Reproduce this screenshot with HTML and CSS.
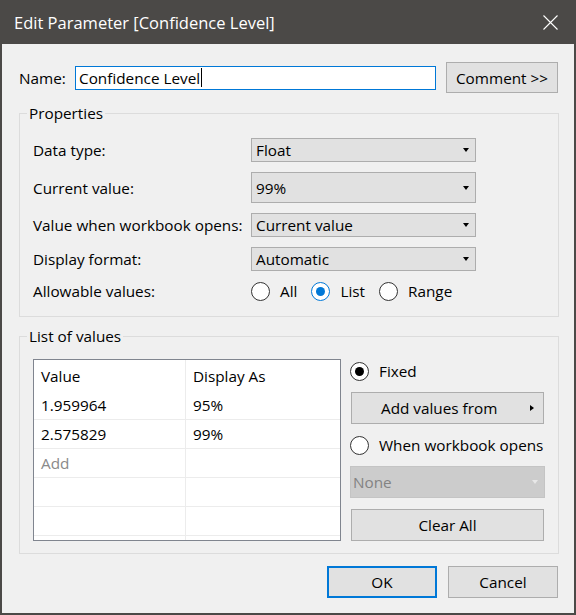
FILE: index.html
```html
<!DOCTYPE html>
<html lang="en">
<head>
    <meta charset="UTF-8">
    <meta name="viewport" content="width=device-width, initial-scale=1.0">
    <title>Edit Parameter [Confidence Level]</title>
    <link rel="stylesheet" href="styles.css">
</head>
<body>
    <div class="dialog">
        <header class="titlebar">
            <span class="title">Edit Parameter [Confidence Level]</span>
            <svg class="close" width="15" height="15" viewBox="0 0 15 15">
                <path d="M0.5 0.5 L14.5 14.5 M14.5 0.5 L0.5 14.5" stroke="#fff" stroke-width="1.1" fill="none"/>
            </svg>
        </header>

        <div class="content">
            <div class="name-row">
                <span class="name-label">Name:</span>
                <div class="name-input">Confidence Level<span class="caret"></span></div>
                <button class="btn comment-btn">Comment &gt;&gt;</button>
            </div>

            <fieldset class="group">
                <legend>Properties</legend>
                <div class="prop-grid">
                    <span>Data type:</span>
                    <div class="select">Float<i class="arrow"></i></div>

                    <span>Current value:</span>
                    <div class="select">99%<i class="arrow"></i></div>

                    <span>Value when workbook opens:</span>
                    <div class="select">Current value<i class="arrow"></i></div>

                    <span>Display format:</span>
                    <div class="select">Automatic<i class="arrow"></i></div>

                    <span>Allowable values:</span>
                    <div class="radios">
                        <span class="option"><span class="radio"></span>All</span>
                        <span class="option"><span class="radio checked blue"></span>List</span>
                        <span class="option"><span class="radio"></span>Range</span>
                    </div>
                </div>
            </fieldset>

            <fieldset class="group list-group">
                <legend>List of values</legend>
                <div class="values-body">
                    <div class="table">
                        <div class="cell head">Value</div>
                        <div class="cell head">Display As</div>
                        <div class="cell">1.959964</div>
                        <div class="cell">95%</div>
                        <div class="cell">2.575829</div>
                        <div class="cell">99%</div>
                        <div class="cell add">Add</div>
                        <div class="cell"></div>
                        <div class="cell"></div>
                        <div class="cell"></div>
                        <div class="cell"></div>
                        <div class="cell"></div>
                        <div class="cell"></div>
                        <div class="cell"></div>
                    </div>

                    <div class="side">
                        <span class="option"><span class="radio checked"></span>Fixed</span>
                        <button class="btn side-btn add-from">Add values from<i class="tri"></i></button>
                        <span class="option"><span class="radio"></span>When workbook opens</span>
                        <div class="select disabled">None<i class="arrow"></i></div>
                        <button class="btn side-btn">Clear All</button>
                    </div>
                </div>
            </fieldset>

            <div class="footer">
                <button class="btn ok">OK</button>
                <button class="btn">Cancel</button>
            </div>
        </div>
    </div>
</body>
</html>
```

FILE: styles.css
```css
body {
    margin: 0;
    font-family: "Open Sans", "Noto Sans", sans-serif;
    font-size: 15.3px;
    color: #000;
    background: #f0f0f0;
}

.dialog {
    width: 576px;
    height: 615px;
    box-sizing: border-box;
    border: 2px solid #4b4947;
    border-top: 0;
    background: #f0f0f0;
}

/* Title bar */
.titlebar {
    height: 44px;
    background: #4b4947;
    color: #fff;
    display: flex;
    align-items: center;
    justify-content: space-between;
    padding: 0 16px 0 12px;
}

.title {
    font-size: 16.5px;
}

.close {
    display: block;
}

.content {
    padding: 18px 15px 0 17px;
}

/* Name row */
.name-row {
    display: flex;
    align-items: center;
    height: 31px;
}

.name-label {
    width: 56px;
}

.name-input {
    width: 361px;
    height: 24px;
    box-sizing: border-box;
    border: 1px solid #0078d7;
    background: #fff;
    padding-left: 3px;
    display: flex;
    align-items: center;
}

.caret {
    display: inline-block;
    width: 1px;
    height: 19px;
    background: #000;
    margin-left: 1px;
}

.btn {
    background: #e1e1e1;
    border: 1px solid #adadad;
    font-family: inherit;
    font-size: 15.3px;
    color: #000;
    padding: 0;
    box-sizing: border-box;
}

.comment-btn {
    width: 112px;
    height: 31px;
    margin-left: 10px;
}

/* Group boxes */
.group {
    margin: 10px 0 0;
    width: 540px;
    box-sizing: border-box;
    border: 1px solid #dcdcdc;
    padding: 0 0 15px;
}

.group legend {
    margin-left: 7px;
    padding: 0 2px;
    line-height: 20px;
}

.prop-grid {
    margin: 15px 0 0 13px;
    display: grid;
    grid-template-columns: 218px 225px;
    grid-template-rows: 24px 31px 24px 24px 20px;
    row-gap: 10px;
    align-items: center;
}

.select {
    height: 100%;
    box-sizing: border-box;
    background: #e1e1e1;
    border: 1px solid #adadad;
    display: flex;
    align-items: center;
    padding: 0 6px 0 4px;
}

.arrow {
    margin-left: auto;
    width: 0;
    height: 0;
    border-left: 3.5px solid transparent;
    border-right: 3.5px solid transparent;
    border-top: 4px solid #000;
}

.select.disabled {
    background: #cccccc;
    border-color: #c4c4c4;
    color: #838383;
    padding-left: 2px;
}

.select.disabled .arrow {
    border-top-color: #e8e8e8;
}

/* Radio buttons */
.radios {
    display: flex;
    align-items: center;
    gap: 14px;
}

.option {
    display: flex;
    align-items: center;
    gap: 10px;
    height: 20px;
}

.radio {
    width: 19px;
    height: 19px;
    box-sizing: border-box;
    border: 1px solid #333;
    border-radius: 50%;
    background: #fff;
    display: flex;
    align-items: center;
    justify-content: center;
}

.radio.checked::after {
    content: "";
    width: 9px;
    height: 9px;
    border-radius: 50%;
    background: #000;
}

.radio.blue {
    border-color: #0078d7;
}

.radio.blue::after {
    background: #0078d7;
}

/* List of values */
.list-group {
    margin-top: 9px;
    padding-bottom: 12px;
}

.values-body {
    margin: 13px 0 0 13px;
    display: flex;
    gap: 9px;
}

.table {
    width: 308px;
    height: 182px;
    box-sizing: border-box;
    border: 1px solid #80858f;
    background: #fff;
    overflow: hidden;
    display: grid;
    grid-template-columns: 152px 1fr;
    grid-template-rows: 31px;
    grid-auto-rows: 29px;
}

.cell {
    box-sizing: border-box;
    border-bottom: 1px solid #ececec;
    padding-left: 7px;
    display: flex;
    align-items: center;
}

.cell:nth-child(odd) {
    border-right: 1px solid #ececec;
}

.cell.head {
    border-bottom: 0;
}

.cell.add {
    color: #8a8a8a;
}

.side {
    width: 195px;
    padding-top: 2px;
    display: flex;
    flex-direction: column;
    gap: 11px;
}

.side-btn {
    height: 32px;
    margin: 0 1px;
}

.add-from {
    display: flex;
    align-items: center;
    justify-content: center;
    padding: 0 9px 0 29px;
}

.tri {
    margin-left: auto;
    width: 0;
    height: 0;
    border-top: 3.5px solid transparent;
    border-bottom: 3.5px solid transparent;
    border-left: 4px solid #000;
}

.side .select {
    height: 32px;
}

/* Footer buttons */
.footer {
    display: flex;
    justify-content: flex-end;
    gap: 11px;
    margin: 12px 1px 0 0;
}

.footer .btn {
    width: 110px;
    height: 32px;
}

.footer .ok {
    border: 2px solid #0078d7;
}
```
